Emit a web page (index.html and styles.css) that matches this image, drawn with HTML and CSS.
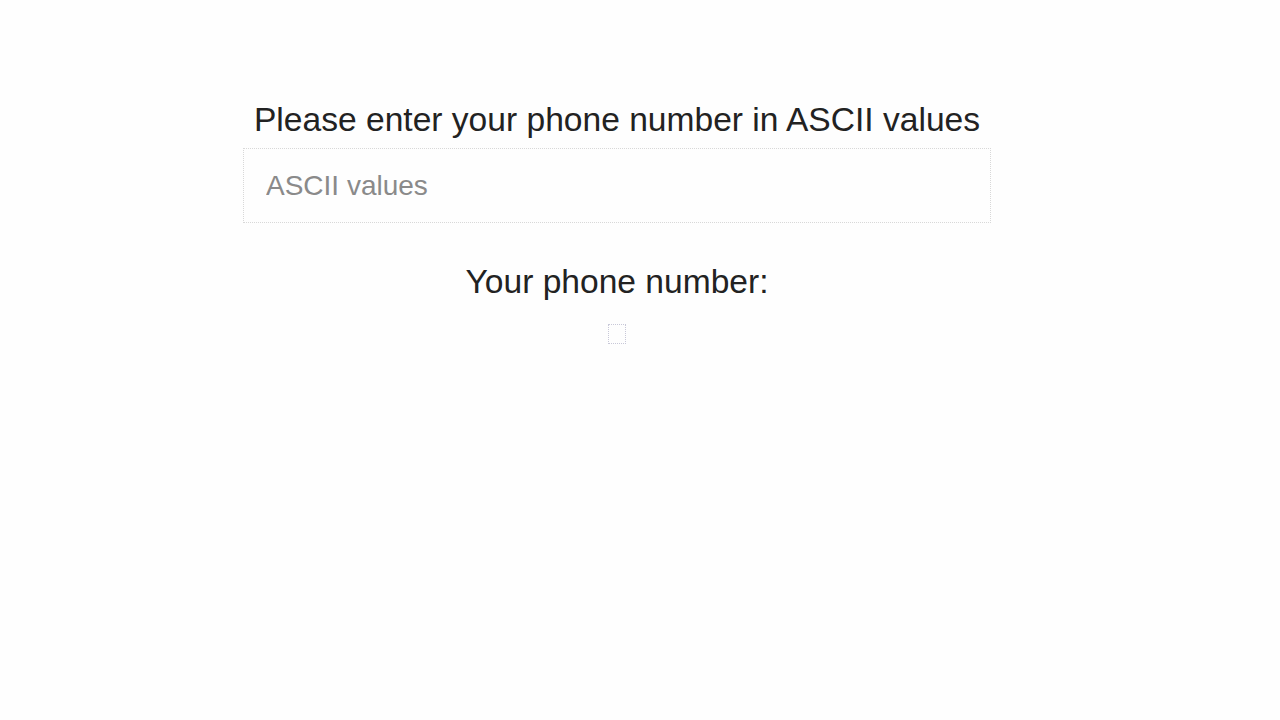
FILE: index.html
```html
<!DOCTYPE html>
<html lang="en">
<head>
<meta charset="utf-8">
<title>Phone number</title>
<link rel="stylesheet" href="styles.css">
</head>
<body>
<main class="page">
  <section class="form">
    <label class="title" for="ascii">Please enter your phone number in ASCII values</label>
    <input class="field" id="ascii" type="text" placeholder="ASCII values">
    <h2 class="result-title">Your phone number:</h2>
    <output class="result"></output>
  </section>
</main>
</body>
</html>
```
FILE: styles.css
```css
html, body {
  margin: 0;
  padding: 0;
  background: #fefefe;
}
body {
  font-family: "Liberation Sans", Arial, sans-serif;
  color: #222;
}
.page {
  display: flex;
  justify-content: center;
  padding: 100px 46px 0 0;
}
.form {
  width: 748px;
  display: flex;
  flex-direction: column;
  align-items: center;
}
.title {
  font-size: 33.6px;
  line-height: 40px;
  margin-bottom: 8px;
}
.field {
  box-sizing: border-box;
  width: 748px;
  height: 75px;
  border: 1px dotted #d8d8d8;
  background: #fefefe;
  padding: 0 22px;
  font-family: "Liberation Sans", Arial, sans-serif;
  font-size: 28px;
  color: #222;
  outline: none;
}
.field::placeholder {
  color: #8a8a8a;
}
.result-title {
  font-weight: normal;
  font-size: 33.6px;
  line-height: 40px;
  margin: 39px 0 0 0;
}
.result {
  display: block;
  box-sizing: border-box;
  width: 18px;
  height: 20px;
  border: 1px dotted #c8c8d8;
  margin-top: 22px;
}
```
